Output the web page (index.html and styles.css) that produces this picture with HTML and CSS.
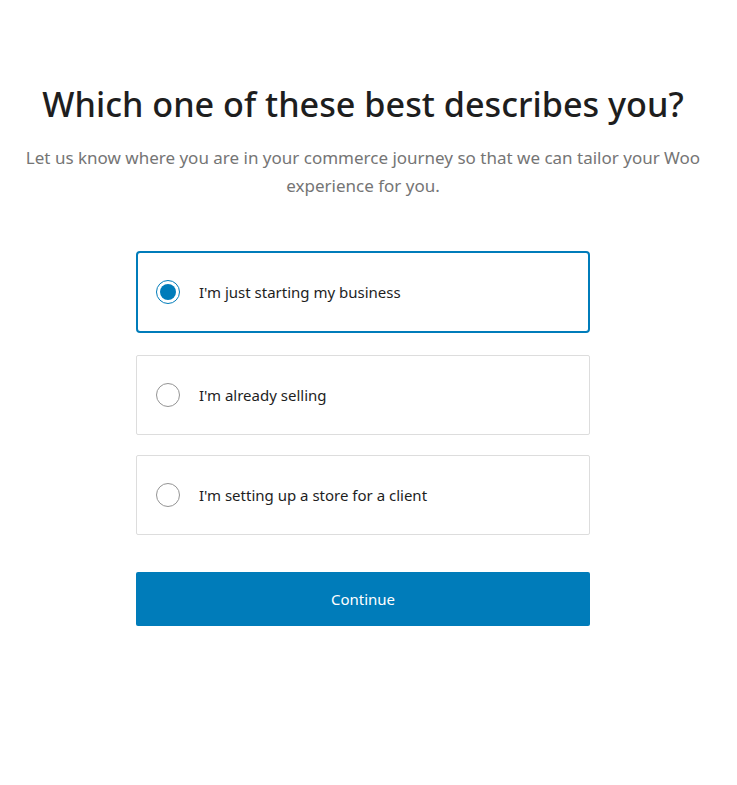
FILE: index.html
```html
<!DOCTYPE html>
<html lang="en">
<head>
    <meta charset="UTF-8">
    <meta name="viewport" content="width=device-width, initial-scale=1.0">
    <title>Which one of these best describes you?</title>
    <link rel="stylesheet" href="styles.css">
</head>
<body>
    <div class="profiler">
        <h1>Which one of these best describes you?</h1>
        <p class="lead">Let us know where you are in your commerce journey so that we can tailor your Woo experience for you.</p>

        <div class="choices">
            <label class="choice is-selected">
                <input type="radio" name="stage" value="started" checked>
                <span class="radio"></span>
                <span class="choice-label">I'm just starting my business</span>
            </label>
            <label class="choice">
                <input type="radio" name="stage" value="selling">
                <span class="radio"></span>
                <span class="choice-label">I'm already selling</span>
            </label>
            <label class="choice">
                <input type="radio" name="stage" value="client">
                <span class="radio"></span>
                <span class="choice-label">I'm setting up a store for a client</span>
            </label>
        </div>

        <button class="continue">Continue</button>
    </div>

    <script>
        // keep the selected card highlighted
        document.querySelectorAll('.choice input').forEach(function (input) {
            input.addEventListener('change', function () {
                document.querySelectorAll('.choice').forEach(function (c) {
                    c.classList.toggle('is-selected', c.querySelector('input').checked);
                });
            });
        });
    </script>
</body>
</html>
```

FILE: styles.css
```css
body {
    font-family: 'Noto Sans', 'Open Sans', sans-serif;
    margin: 0;
    padding: 0 11px 0 0;
    background: #fff;
    color: #1e1e1e;
}
.profiler {
    max-width: 700px;
    margin: 0 auto;
    padding-top: 80px;
    text-align: center;
}
h1 {
    font-size: 34.2px;
    font-weight: 500;
    line-height: 48px;
    margin: 0 0 16px;
    color: #1e1e1e;
}
.lead {
    font-size: 17px;
    line-height: 28px;
    color: #757575;
    margin: 0 auto;
}
.choices {
    width: 454px;
    margin: 51px auto 0;
    display: flex;
    flex-direction: column;
    gap: 20px;
}
.choice {
    display: flex;
    align-items: center;
    height: 80px;
    box-sizing: border-box;
    padding: 0 19px;
    border: 1px solid #ddd;
    border-radius: 2px;
    text-align: left;
    cursor: pointer;
}
.choice.is-selected {
    border: 2px solid #007cba;
    border-radius: 4px;
    padding: 0 18px;
    height: 82px;
    margin-bottom: 2px;
}
.choice input {
    display: none;
}
.radio {
    width: 24px;
    height: 24px;
    box-sizing: border-box;
    border: 1px solid #949494;
    border-radius: 50%;
    flex-shrink: 0;
    position: relative;
}
.is-selected .radio {
    border: 1.5px solid #007cba;
}
.is-selected .radio::after {
    content: '';
    position: absolute;
    top: 2.5px;
    left: 2.5px;
    width: 16px;
    height: 16px;
    border-radius: 50%;
    background: #007cba;
}
.choice-label {
    margin-left: 19px;
    font-size: 15px;
    color: #1e1e1e;
}
.continue {
    display: block;
    width: 454px;
    height: 54px;
    margin: 37px auto 0;
    border: none;
    border-radius: 2px;
    background: #007cba;
    color: #fff;
    font-family: inherit;
    font-size: 15px;
    cursor: pointer;
}
```
